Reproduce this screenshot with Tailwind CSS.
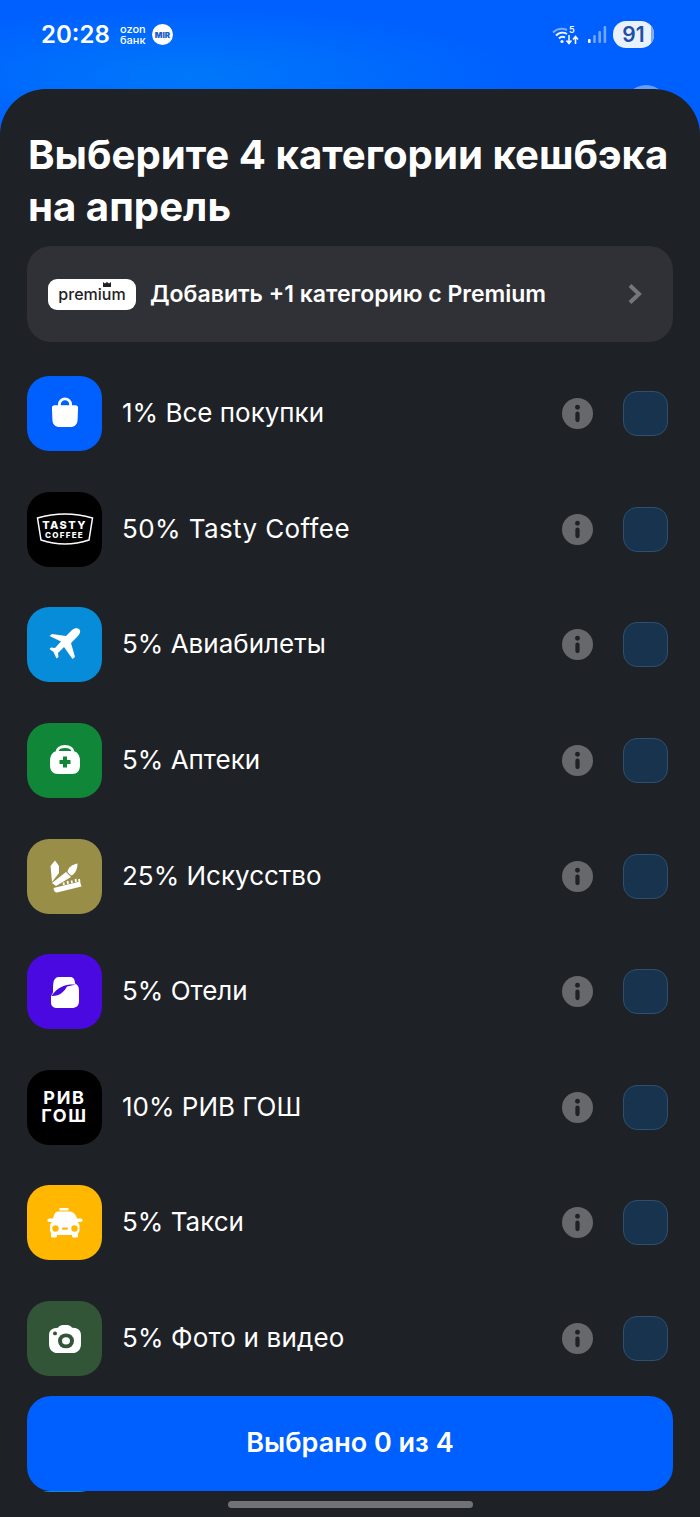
<!DOCTYPE html>
<html lang="ru">
<head>
    <meta charset="UTF-8">
    <meta name="viewport" content="width=device-width, initial-scale=1.0">
    <title>Категории кешбэка</title>
    <script src="https://cdn.jsdelivr.net/npm/@tailwindcss/browser@4"></script>
</head>
<body class="bg-[#005fff] font-['Inter',sans-serif]">
<div class="relative w-[700px] h-[1517px] overflow-hidden flex flex-col bg-[radial-gradient(ellipse_340px_70px_at_190px_75px,#0078fa,#005fff)]">

    <!-- status bar -->
    <div class="relative h-[89px] shrink-0 flex items-start justify-between pl-[41px] pr-[46px] pt-[20px] text-white">
        <div class="flex items-center h-[29px]">
            <span class="text-[24px] font-semibold leading-none w-[79px]">20:28</span>
            <div class="text-[11px] leading-[11px] font-medium w-[32px]">ozon<br>банк</div>
            <div class="w-[21px] h-[21px] rounded-full bg-white flex items-center justify-center text-[8px] font-black text-[#1c5fc4] leading-none">MIR</div>
        </div>
        <div class="flex items-center h-[29px] gap-[6px]">
            <svg width="28" height="20" viewBox="0 0 28 20" fill="none" class="opacity-95">
                <path d="M1 7.500 A13 13 0 0 1 15 5" stroke="#fff" stroke-opacity=".5" stroke-width="2"/>
                <path d="M4 10.500 A9 9 0 0 1 15 9" stroke="#fff" stroke-width="2"/>
                <path d="M7 13.500 A5 5 0 0 1 13 12.500" stroke="#fff" stroke-width="2"/>
                <circle cx="10" cy="16.500" r="1.600" fill="#fff"/>
                <path d="M17 10v8M14.500 15.500l2.500 3 2.500-3M23.500 19v-7M21 14.500l2.500-3 2.500 3" stroke="#fff" stroke-width="1.600"/>
                <text x="17" y="8" font-size="9" font-weight="600" fill="#fff" font-family="Inter">5</text>
            </svg>
            <svg width="20" height="20" viewBox="0 0 20 20" fill="#fff" class="ml-[1px]">
                <rect x="1" y="14" width="2.600" height="4" rx="1"/>
                <rect x="6.200" y="10" width="2.600" height="8" rx="1" opacity=".45"/>
                <rect x="11.400" y="6" width="2.600" height="12" rx="1" opacity=".45"/>
                <rect x="16.600" y="1" width="2.600" height="17" rx="1" opacity=".45"/>
            </svg>
            <div class="relative w-[41px] h-[27px] rounded-[13px] bg-[#e9f1ff] overflow-hidden flex items-center justify-center text-[21px] font-semibold text-[#1d4fa5] leading-none">
                91
                <div class="absolute right-0 top-0 bottom-0 w-[3px] bg-[#7fa8f0]"></div>
            </div>
        </div>
        <div class="absolute right-[32px] top-[85px] w-[44px] h-[44px] rounded-full bg-white/40"></div>
    </div>

    <!-- bottom sheet -->
    <div class="relative flex-1 rounded-t-[46px] bg-[#1e2126] overflow-hidden pt-[40px]">
        <h1 class="px-[28px] text-[40.2px] leading-[52px] font-bold text-white whitespace-nowrap">Выберите 4 категории кешбэка<br>на апрель</h1>

        <div class="mx-[27px] mt-[13px] h-[96px] rounded-[24px] bg-[#303136] flex items-center pl-[21px] pr-[30px]">
            <div class="w-[88px] h-[31px] rounded-[9px] bg-white flex items-center justify-center text-[16px] font-medium text-[#1e2126] leading-none">premi<span class="relative">u<svg class="absolute left-[1px] -top-[4px]" width="8" height="5" viewBox="0 0 8 5" fill="#1e2126"><path d="M0 0l2 1.500L4 0l2 1.500L8 0v5H0z"/></svg></span>m</div>
            <span class="ml-[14px] text-[23px] font-semibold text-white leading-none">Добавить +1 категорию с Premium</span>
            <svg class="ml-auto" width="16" height="22" viewBox="0 0 16 22" fill="none"><path d="M3 2.500l9 8.500-9 8.500" stroke="#75767a" stroke-width="4"/></svg>
        </div>

        <ul class="mt-[34px]">
            <li class="h-[115.65px] flex items-start pl-[27px] pr-[32px]">
                <div class="w-[75px] h-[75px] rounded-[22px] bg-[#005fff] flex items-center justify-center">
                    <svg class="-mt-[2px]" width="28" height="31" viewBox="0 0 30 34" fill="none" preserveAspectRatio="none"><path d="M9 11V8a6 6 0 0 1 12 0v3" stroke="#fff" stroke-width="3"/><path d="M4 9h22c2 0 3 1 3 3l-.5 13c0 5-3 8-8 8h-11c-5 0-8-3-8-8L1 12c0-2 1-3 3-3z" fill="#fff"/></svg>
                </div>
                <span class="ml-[20px] mt-[20px] text-[26px] leading-[33px] text-white">1% Все покупки</span>
                <div class="ml-auto mt-[15px] flex items-center gap-[30px]">
                    <svg width="31" height="31" viewBox="0 0 32 32"><circle cx="16" cy="16" r="16" fill="#67686c"/><circle cx="16" cy="9.500" r="2.500" fill="#1e2126"/><rect x="13.800" y="14" width="4.400" height="11" rx="2.200" fill="#1e2126"/></svg>
                    <div class="w-[45px] h-[45px] rounded-[14px] bg-[#17334e] border border-[#2e506e]"></div>
                </div>
            </li>
            <li class="h-[115.65px] flex items-start pl-[27px] pr-[32px]">
                <div class="w-[75px] h-[75px] rounded-[22px] bg-black flex items-center justify-center">
                    <div class="relative w-[58px] h-[34px] flex flex-col items-center justify-center text-white font-extrabold">
                        <svg class="absolute inset-0" width="58" height="34" viewBox="0 0 58 34" fill="none"><path d="M1.500 6 Q29 -2 56.500 6 L53 28 Q29 36 5 28z" stroke="#fff" stroke-width="1.500"/></svg>
                        <span class="text-[11px] leading-[12px] tracking-[1.400px]">TASTY</span>
                        <span class="text-[8px] leading-[9px] tracking-[1.300px]">COFFEE</span>
                    </div>
                </div>
                <span class="ml-[20px] mt-[20px] text-[26px] leading-[33px] text-white tracking-[0.4px]">50% Tasty Coffee</span>
                <div class="ml-auto mt-[15px] flex items-center gap-[30px]">
                    <svg width="31" height="31" viewBox="0 0 32 32"><circle cx="16" cy="16" r="16" fill="#67686c"/><circle cx="16" cy="9.500" r="2.500" fill="#1e2126"/><rect x="13.800" y="14" width="4.400" height="11" rx="2.200" fill="#1e2126"/></svg>
                    <div class="w-[45px] h-[45px] rounded-[14px] bg-[#17334e] border border-[#2e506e]"></div>
                </div>
            </li>
            <li class="h-[115.65px] flex items-start pl-[27px] pr-[32px]">
                <div class="w-[75px] h-[75px] rounded-[22px] bg-[#078cd9] flex items-center justify-center">
                    <svg width="50" height="50" viewBox="0 0 50 50" fill="#fff"><path d="M39.500 9.500C41 11 40 14 37 17L31 23L35 37L32.500 39L24 27L18 33L18.500 37L16.500 38.500L13.500 32L9.500 29L11 27.500L15 28L21 21.500L9.500 16L12 14L26 16L32 10C35 7.500 38 8 39.500 9.500z"/></svg>
                </div>
                <span class="ml-[20px] mt-[20px] text-[26px] leading-[33px] text-white">5% Авиабилеты</span>
                <div class="ml-auto mt-[15px] flex items-center gap-[30px]">
                    <svg width="31" height="31" viewBox="0 0 32 32"><circle cx="16" cy="16" r="16" fill="#67686c"/><circle cx="16" cy="9.500" r="2.500" fill="#1e2126"/><rect x="13.800" y="14" width="4.400" height="11" rx="2.200" fill="#1e2126"/></svg>
                    <div class="w-[45px] h-[45px] rounded-[14px] bg-[#17334e] border border-[#2e506e]"></div>
                </div>
            </li>
            <li class="h-[115.65px] flex items-start pl-[27px] pr-[32px]">
                <div class="w-[75px] h-[75px] rounded-[22px] bg-[#108639] flex items-center justify-center">
                    <svg width="32" height="32" viewBox="0 0 32 32" fill="none"><path d="M8 9V8c0-3 3-5.500 8-5.500S24 5 24 8v1" stroke="#fff" stroke-width="3"/><path d="M9 7h14c5 0 8 4 8 10v4c0 6-3 9-8 9H9c-5 0-8-3-8-9v-4C1 11 4 7 9 7z" fill="#fff"/><path d="M14 12.500h4V16h3.500v4H18v3.500h-4V20h-3.500v-4H14z" fill="#108639"/></svg>
                </div>
                <span class="ml-[20px] mt-[20px] text-[26px] leading-[33px] text-white">5% Аптеки</span>
                <div class="ml-auto mt-[15px] flex items-center gap-[30px]">
                    <svg width="31" height="31" viewBox="0 0 32 32"><circle cx="16" cy="16" r="16" fill="#67686c"/><circle cx="16" cy="9.500" r="2.500" fill="#1e2126"/><rect x="13.800" y="14" width="4.400" height="11" rx="2.200" fill="#1e2126"/></svg>
                    <div class="w-[45px] h-[45px] rounded-[14px] bg-[#17334e] border border-[#2e506e]"></div>
                </div>
            </li>
            <li class="h-[115.65px] flex items-start pl-[27px] pr-[32px]">
                <div class="w-[75px] h-[75px] rounded-[22px] bg-[#998e48] flex items-center justify-center">
                    <svg width="50" height="50" viewBox="0 0 50 50" fill="#fff"><path d="M15 9.500L19 15V22L12 31L10.500 15z"/><path d="M37.500 12.500C37.500 18 35 23.500 31 24.500L27.500 21C27.500 17 32 13.500 37.500 12.500z"/><path d="M26 21L31 26L16 35L12 32z"/><path d="M13.500 37L40 30.500L41.500 35.500L17 41.500Q14 41.500 13.500 37z"/><path d="M24 34L23.500 31.500M28 33L27.500 30M32 32L31.500 29.500M36 31L35.500 28M39.500 31L39 28" stroke="#fff" stroke-width="1.800" fill="none"/></svg>
                </div>
                <span class="ml-[20px] mt-[20px] text-[26px] leading-[33px] text-white">25% Искусство</span>
                <div class="ml-auto mt-[15px] flex items-center gap-[30px]">
                    <svg width="31" height="31" viewBox="0 0 32 32"><circle cx="16" cy="16" r="16" fill="#67686c"/><circle cx="16" cy="9.500" r="2.500" fill="#1e2126"/><rect x="13.800" y="14" width="4.400" height="11" rx="2.200" fill="#1e2126"/></svg>
                    <div class="w-[45px] h-[45px] rounded-[14px] bg-[#17334e] border border-[#2e506e]"></div>
                </div>
            </li>
            <li class="h-[115.65px] flex items-start pl-[27px] pr-[32px]">
                <div class="w-[75px] h-[75px] rounded-[22px] bg-[#4a09e0] flex items-center justify-center">
                    <svg width="50" height="50" viewBox="0 0 50 50"><path d="M19 10H30C33.500 10 35 12.500 35 16.500C38 18 39 20 39 24V34C39 39 36 41 32 41H18C13 41 11 39 11 35V29.500C11 28 13 26.500 13 25C13 21 13 18 13.500 15C14 12 16 10 19 10z" fill="#fff"/><path d="M36 17.500C26 17 18 19 11.500 29C19 29.500 24 25 27 19.500C30 18.800 33 18.200 36 17.500z" fill="#4a09e0"/></svg>
                </div>
                <span class="ml-[20px] mt-[20px] text-[26px] leading-[33px] text-white">5% Отели</span>
                <div class="ml-auto mt-[15px] flex items-center gap-[30px]">
                    <svg width="31" height="31" viewBox="0 0 32 32"><circle cx="16" cy="16" r="16" fill="#67686c"/><circle cx="16" cy="9.500" r="2.500" fill="#1e2126"/><rect x="13.800" y="14" width="4.400" height="11" rx="2.200" fill="#1e2126"/></svg>
                    <div class="w-[45px] h-[45px] rounded-[14px] bg-[#17334e] border border-[#2e506e]"></div>
                </div>
            </li>
            <li class="h-[115.65px] flex items-start pl-[27px] pr-[32px]">
                <div class="w-[75px] h-[75px] rounded-[22px] bg-black flex flex-col items-center justify-center text-white font-bold text-[18px] leading-[18px] tracking-[1.700px]">
                    <span>РИВ</span>
                    <span>ГОШ</span>
                </div>
                <span class="ml-[20px] mt-[20px] text-[26px] leading-[33px] text-white">10% РИВ ГОШ</span>
                <div class="ml-auto mt-[15px] flex items-center gap-[30px]">
                    <svg width="31" height="31" viewBox="0 0 32 32"><circle cx="16" cy="16" r="16" fill="#67686c"/><circle cx="16" cy="9.500" r="2.500" fill="#1e2126"/><rect x="13.800" y="14" width="4.400" height="11" rx="2.200" fill="#1e2126"/></svg>
                    <div class="w-[45px] h-[45px] rounded-[14px] bg-[#17334e] border border-[#2e506e]"></div>
                </div>
            </li>
            <li class="h-[115.65px] flex items-start pl-[27px] pr-[32px]">
                <div class="w-[75px] h-[75px] rounded-[22px] bg-[#ffb700] flex items-center justify-center">
                    <svg width="50" height="50" viewBox="0 0 50 50"><path d="M19.500 10h9v2.500h-9z" fill="#fff"/><path d="M13 21C14 16 15 13.500 19 13.500H29C33 13.500 36 16 37 21z" fill="#fff"/><rect x="7.500" y="20.500" width="35" height="3.500" rx="1.750" fill="#fff"/><rect x="10" y="23" width="29.500" height="14" rx="5" fill="#fff"/><rect x="11" y="35" width="6" height="4.500" rx="1.500" fill="#fff"/><rect x="32" y="35" width="6" height="4.500" rx="1.500" fill="#fff"/><circle cx="15.500" cy="30.500" r="3.200" fill="#ffb700"/><circle cx="34.500" cy="30.500" r="3.200" fill="#ffb700"/><rect x="22" y="29.500" width="6" height="2.200" rx="1" fill="#ffb700"/></svg>
                </div>
                <span class="ml-[20px] mt-[20px] text-[26px] leading-[33px] text-white">5% Такси</span>
                <div class="ml-auto mt-[15px] flex items-center gap-[30px]">
                    <svg width="31" height="31" viewBox="0 0 32 32"><circle cx="16" cy="16" r="16" fill="#67686c"/><circle cx="16" cy="9.500" r="2.500" fill="#1e2126"/><rect x="13.800" y="14" width="4.400" height="11" rx="2.200" fill="#1e2126"/></svg>
                    <div class="w-[45px] h-[45px] rounded-[14px] bg-[#17334e] border border-[#2e506e]"></div>
                </div>
            </li>
            <li class="h-[115.65px] flex items-start pl-[27px] pr-[32px]">
                <div class="w-[75px] h-[75px] rounded-[22px] bg-[#315536] flex items-center justify-center">
                    <svg class="mt-[1px]" width="32" height="28" viewBox="0 0 32 30" preserveAspectRatio="none"><path d="M9 3c1-2 3-3 5-3h4c2 0 4 1 5 3h1c5 0 8 3 8 8v9c0 6-3 10-9 10H9c-6 0-9-4-9-10v-9c0-5 3-8 9-8z" fill="#fff"/><circle cx="17" cy="17" r="8" fill="#315536"/><circle cx="17" cy="17" r="4" fill="#fff"/><circle cx="6" cy="9" r="2" fill="#315536"/></svg>
                </div>
                <span class="ml-[20px] mt-[20px] text-[26px] leading-[33px] text-white tracking-[0.15px]">5% Фото и видео</span>
                <div class="ml-auto mt-[15px] flex items-center gap-[30px]">
                    <svg width="31" height="31" viewBox="0 0 32 32"><circle cx="16" cy="16" r="16" fill="#67686c"/><circle cx="16" cy="9.500" r="2.500" fill="#1e2126"/><rect x="13.800" y="14" width="4.400" height="11" rx="2.200" fill="#1e2126"/></svg>
                    <div class="w-[45px] h-[45px] rounded-[14px] bg-[#17334e] border border-[#2e506e]"></div>
                </div>
            </li>
            <li class="h-[115.65px] flex items-start pl-[27px] pr-[32px]">
                <div class="w-[75px] h-[75px] rounded-[22px] bg-[#078cd9]"></div>
            </li>
        </ul>

        <!-- fixed footer over the list -->
        <div class="absolute left-0 right-0 bottom-0 h-[121px] px-[27px]">
            <div class="absolute left-0 right-0 top-0 h-[95px] bg-[#1e2126]"></div>
            <button class="relative w-full h-[95px] rounded-[24px] bg-[#005fff] text-[27px] font-semibold text-white">Выбрано 0 из 4</button>
            <div class="relative mx-auto mt-[10px] w-[245px] h-[7px] rounded-full bg-[#717276]"></div>
        </div>
    </div>
</div>
</body>
</html>
